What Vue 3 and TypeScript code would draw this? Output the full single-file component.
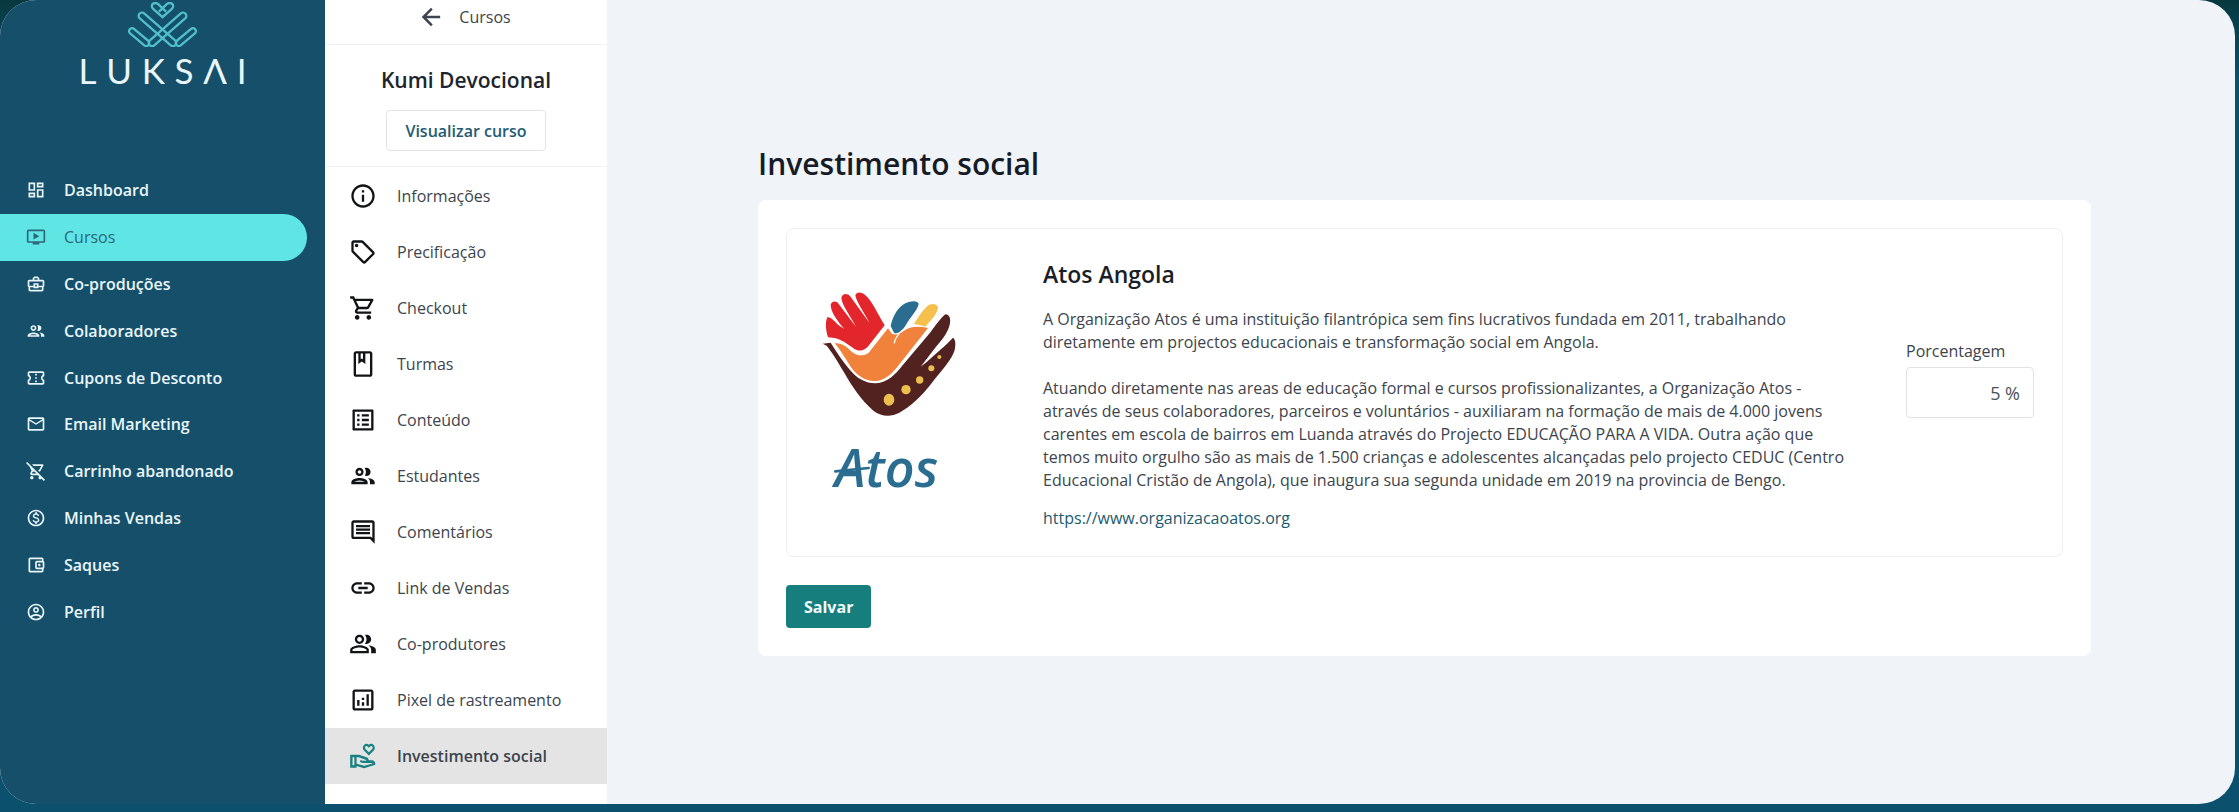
<script setup lang="ts">
import { ref } from 'vue'

interface NavItem {
  label: string
  icon: string
  active?: boolean
}

const people =
  'M9 13.75c-2.34 0-7 1.17-7 3.5V19h14v-1.75c0-2.33-4.66-3.5-7-3.5zM4.34 17c.84-.58 2.87-1.25 4.66-1.25s3.82.67 4.66 1.25H4.34zM9 12c1.93 0 3.5-1.57 3.5-3.5S10.93 5 9 5 5.5 6.57 5.5 8.5 7.07 12 9 12zm0-5c.83 0 1.5.67 1.5 1.5S9.83 10 9 10s-1.5-.67-1.5-1.5S8.17 7 9 7zm7.04 6.81c1.16.84 1.96 1.96 1.96 3.44V19h4v-1.75c0-2.02-3.5-3.17-5.96-3.44zM15 12c1.93 0 3.5-1.57 3.5-3.5S16.93 5 15 5c-.54 0-1.04.13-1.5.35.63.89 1 1.98 1 3.15s-.37 2.26-1 3.15c.46.22.96.35 1.5.35z'

const mainNav: NavItem[] = [
  { label: 'Dashboard', icon: 'M19 5v2h-4V5h4M9 5v6H5V5h4m10 8v6h-4v-6h4M9 17v2H5v-2h4M21 3h-8v6h8V3zM11 3H3v10h8V3zm10 8h-8v10h8V11zm-10 4H3v6h8v-6z' },
  { label: 'Cursos', active: true, icon: 'M21 3H3c-1.11 0-2 .89-2 2v12c0 1.1.89 2 2 2h5v2h8v-2h5c1.1 0 1.99-.9 1.99-2L23 5c0-1.11-.9-2-2-2zm0 14H3V5h18v12zm-5-6l-7 4V7z' },
  { label: 'Co-produções', icon: 'M20 7h-4V5l-2-2h-4L8 5v2H4c-1.1 0-2 .9-2 2v5c0 .75.4 1.38 1 1.73V19c0 1.11.89 2 2 2h14c1.11 0 2-.89 2-2v-3.28c.59-.35 1-.99 1-1.72V9c0-1.1-.9-2-2-2zM10 5h4v2h-4V5zM4 9h16v5h-5v-3H9v3H4V9zm9 6h-2v-2h2v2zm6 4H5v-3h4v1h6v-1h4v3z' },
  { label: 'Colaboradores', icon: people },
  { label: 'Cupons de Desconto', icon: 'M22 10V6c0-1.11-.9-2-2-2H4c-1.1 0-1.99.89-1.99 2v4c1.1 0 1.99.9 1.99 2s-.89 2-2 2v4c0 1.1.9 2 2 2h16c1.1 0 2-.9 2-2v-4c-1.1 0-2-.9-2-2s.9-2 2-2zm-2-1.46c-1.19.69-2 1.99-2 3.46s.81 2.77 2 3.46V18H4v-2.54c1.19-.69 2-1.99 2-3.46 0-1.48-.8-2.77-1.99-3.46L4 6h16v2.54zM11 15h2v2h-2zm0-4h2v2h-2zm0-4h2v2h-2z' },
  { label: 'Email Marketing', icon: 'M22 6c0-1.1-.9-2-2-2H4c-1.1 0-2 .9-2 2v12c0 1.1.9 2 2 2h16c1.1 0 2-.9 2-2V6zm-2 0l-8 5-8-5h16zm0 12H4V8l8 5 8-5v10z' },
  { label: 'Carrinho abandonado', icon: 'M1.41 1.13L0 2.54l4.39 4.39 2.21 4.66-1.35 2.45c-.16.28-.25.61-.25.96 0 1.1.9 2 2 2h7.46l1.38 1.38c-.5.36-.83.95-.83 1.62 0 1.1.89 2 1.99 2 .67 0 1.26-.33 1.62-.84L21.46 24l1.41-1.41L1.41 1.13zM7 15l1.1-2h2.36l2 2H7zM20 4H7.12l2 2h9.19l-2.76 5h-1.44l1.94 1.94c.54-.14.99-.49 1.25-.97l3.58-6.49C21.25 4.82 20.76 4 20 4zM7 18c-1.1 0-1.99.9-1.99 2S5.9 22 7 22s2-.9 2-2-.9-2-2-2z' },
  { label: 'Minhas Vendas', icon: 'M12 2C6.48 2 2 6.48 2 12s4.48 10 10 10 10-4.48 10-10S17.52 2 12 2zm0 18c-4.41 0-8-3.59-8-8s3.59-8 8-8 8 3.59 8 8-3.59 8-8 8zm.31-8.86c-1.77-.45-2.34-.94-2.34-1.67 0-.84.79-1.43 2.1-1.43 1.38 0 1.9.66 1.94 1.64h1.71c-.05-1.34-.87-2.57-2.49-2.97V5H10.9v1.69c-1.51.32-2.72 1.3-2.72 2.81 0 1.79 1.49 2.69 3.66 3.21 1.95.46 2.34 1.15 2.34 1.87 0 .53-.39 1.39-2.1 1.39-1.6 0-2.23-.72-2.32-1.64H8.04c.1 1.7 1.36 2.66 2.86 2.97V19h2.34v-1.67c1.52-.29 2.72-1.16 2.73-2.77-.01-2.2-1.9-2.96-3.66-3.42z' },
  { label: 'Saques', icon: 'M21 7.28V5c0-1.1-.9-2-2-2H5c-1.11 0-2 .9-2 2v14c0 1.1.89 2 2 2h14c1.1 0 2-.9 2-2v-2.28c.59-.35 1-.98 1-1.72V9c0-.74-.41-1.37-1-1.72zM20 9v6h-7V9h7zM5 19V5h14v2h-6c-1.1 0-2 .9-2 2v6c0 1.1.9 2 2 2h6v2H5zM16 10.5a1.5 1.5 0 1 0 0 3a1.5 1.5 0 1 0 0-3z' },
  { label: 'Perfil', icon: 'M12 2C6.48 2 2 6.48 2 12s4.48 10 10 10 10-4.48 10-10S17.52 2 12 2zM7.07 18.28c.43-.9 3.05-1.78 4.93-1.78s4.51.88 4.93 1.78C15.57 19.36 13.86 20 12 20s-3.57-.64-4.93-1.72zm11.29-1.45c-1.43-1.74-4.9-2.33-6.36-2.33s-4.93.59-6.36 2.33C4.62 15.49 4 13.82 4 12c0-4.41 3.59-8 8-8s8 3.59 8 8c0 1.82-.62 3.49-1.64 4.83zM12 6c-1.94 0-3.5 1.56-3.5 3.5S10.06 13 12 13s3.5-1.56 3.5-3.5S13.94 6 12 6zm0 5c-.83 0-1.5-.67-1.5-1.5S11.17 8 12 8s1.5.67 1.5 1.5S12.83 11 12 11z' },
]

const courseNav: NavItem[] = [
  { label: 'Informações', icon: 'M11 7h2v2h-2zm0 4h2v6h-2zm1-9C6.48 2 2 6.48 2 12s4.48 10 10 10 10-4.48 10-10S17.52 2 12 2zm0 18c-4.41 0-8-3.59-8-8s3.59-8 8-8 8 3.59 8 8-3.59 8-8 8z' },
  { label: 'Precificação', icon: 'M21.41 11.58l-9-9C12.05 2.22 11.55 2 11 2H4c-1.1 0-2 .9-2 2v7c0 .55.22 1.05.59 1.42l9 9c.36.36.86.58 1.41.58s1.05-.22 1.41-.59l7-7c.37-.36.59-.86.59-1.41s-.23-1.06-.59-1.42zM13 20.01L4 11V4h7v-.01l9 9-7 7.02zM6.5 5a1.5 1.5 0 1 0 0 3a1.5 1.5 0 1 0 0-3z' },
  { label: 'Checkout', icon: 'M15.55 13c.75 0 1.41-.41 1.75-1.03l3.58-6.49c.37-.66-.11-1.48-.87-1.48H5.21l-.94-2H1v2h2l3.6 7.59-1.35 2.44C4.52 15.37 5.48 17 7 17h12v-2H7l1.1-2h7.45zM6.16 6h12.15l-2.76 5H8.53L6.16 6zM7 18c-1.1 0-1.99.9-1.99 2S5.9 22 7 22s2-.9 2-2-.9-2-2-2zm10 0c-1.1 0-1.99.9-1.99 2s.89 2 1.99 2 2-.9 2-2-.9-2-2-2z' },
  { label: 'Turmas', icon: 'M18 1H6c-1.1 0-2 .9-2 2v18c0 1.1.9 2 2 2h12c1.1 0 2-.9 2-2V3c0-1.1-.9-2-2-2zM10 3h2v5l-1-.75L10 8V3zm8 18H6V3h2v9l3-2.25L14 12V3h4v18z' },
  { label: 'Conteúdo', icon: 'M19 5v14H5V5h14m1.1-2H3.9c-.5 0-.9.4-.9.9v16.2c0 .4.4.9.9.9h16.2c.4 0 .9-.5.9-.9V3.9c0-.5-.5-.9-.9-.9zM11 7h6v2h-6V7zm0 4h6v2h-6v-2zm0 4h6v2h-6zM7 7h2v2H7zm0 4h2v2H7zm0 4h2v2H7z' },
  { label: 'Estudantes', icon: people },
  { label: 'Comentários', icon: 'M21.99 4c0-1.1-.89-2-1.99-2H4c-1.1 0-2 .9-2 2v12c0 1.1.9 2 2 2h14l4 4-.01-18zM20 4v13.17L18.83 16H4V4h16zM6 12h12v2H6zm0-3h12v2H6zm0-3h12v2H6z' },
  { label: 'Link de Vendas', icon: 'M3.9 12c0-1.71 1.39-3.1 3.1-3.1h4V7H7c-2.76 0-5 2.24-5 5s2.24 5 5 5h4v-1.9H7c-1.71 0-3.1-1.39-3.1-3.1zM8 13h8v-2H8v2zm9-6h-4v1.9h4c1.71 0 3.1 1.39 3.1 3.1s-1.39 3.1-3.1 3.1h-4V17h4c2.76 0 5-2.24 5-5s-2.24-5-5-5z' },
  { label: 'Co-produtores', icon: 'M16.67 13.13C18.04 14.06 19 15.32 19 17v3h4v-3c0-2.18-3.57-3.47-6.33-3.87zM15 12c2.21 0 4-1.79 4-4s-1.79-4-4-4c-.47 0-.91.1-1.33.24C14.5 5.27 15 6.58 15 8s-.5 2.73-1.33 3.76c.42.14.86.24 1.33.24zM9 12c2.21 0 4-1.79 4-4s-1.79-4-4-4-4 1.79-4 4 1.79 4 4 4zm0-6c1.1 0 2 .9 2 2s-.9 2-2 2-2-.9-2-2 .9-2 2-2zm0 7c-2.67 0-8 1.34-8 4v3h16v-3c0-2.66-5.33-4-8-4zm6 5H3v-.99C3.2 16.29 6.3 15 9 15s5.8 1.29 6 2v1z' },
  { label: 'Pixel de rastreamento', icon: 'M19 3H5c-1.1 0-2 .9-2 2v14c0 1.1.9 2 2 2h14c1.1 0 2-.9 2-2V5c0-1.1-.9-2-2-2zm0 16H5V5h14v14zM7 12h2v5H7zM15 7h2v10h-2zM11 14h2v3h-2zM11 10h2v2h-2z' },
  { label: 'Investimento social', active: true, icon: 'M1 11v11h5.5v-1.4l6.5 1.9 9.5-2.9v-1c0-1.7-1.3-2.9-3-2.9h-2.6c0-1.3-.7-2.3-1.9-2.7L8.6 11zM3 13h1.6v7H3zM6.500 13h1.8l6 2.200c.4.200.6.500.6.900h-3.200l-1.800-.6-.6 1.600 2.500.9h7.700c.4 0 .7.2.8.5L13 20.400l-6.500-1.800zM17 11.500l-4-3.900c-1.300-1.300-1.500-3.200-.5-4.700C13.700 1.300 15.800 1.100 17 2.400c1.200-1.300 3.300-1.100 4.500.5 1 1.500.8 3.400-.5 4.700zM17 8.700l2.600-2.500c.8-.8.900-1.500.5-2.200-.5-.8-1.600-.8-2.200 0L17 5l-.9-1c-.6-.8-1.700-.8-2.200 0-.4.700-.3 1.400.5 2.200z' },
]

const wordmark = ['L', 'U', 'K', 'S', 'Λ', 'I']
const percentage = ref('5 %')
</script>

<template>
  <div class="page">
    <div class="shell">
      <aside class="sidebar">
        <div class="brand">
          <svg class="brand-mark" viewBox="380 5 214 136" aria-hidden="true">
            <g fill="none" stroke="#4fc0c9" stroke-width="7">
              <rect x="-10" y="-10" width="144" height="20" rx="10" transform="translate(425 47) rotate(41)" />
              <rect x="-10" y="-10" width="144" height="20" rx="10" transform="translate(549 47) rotate(139)" />
              <rect x="-9" y="-9" width="74" height="18" rx="9" transform="translate(395 93) rotate(40)" />
              <rect x="-9" y="-9" width="74" height="18" rx="9" transform="translate(579 93) rotate(140)" />
              <path d="M487 51L458 25C448 12 463 3 475 12L487 24L499 12C511 3 526 12 516 25ZM487 24L476 34M487 24L498 34" />
            </g>
          </svg>
          <div class="wordmark" role="img" aria-label="LUKSAI">
            <span v-for="letter in wordmark" :key="letter">{{ letter }}</span>
          </div>
        </div>
        <nav class="main-nav" aria-label="Menu principal">
          <a v-for="item in mainNav" :key="item.label" href="#" :class="{ active: item.active }">
            <svg viewBox="0 0 24 24" aria-hidden="true"><path :d="item.icon" /></svg>
            <span>{{ item.label }}</span>
          </a>
        </nav>
      </aside>

      <aside class="course">
        <a class="back" href="#">
          <svg viewBox="0 0 24 24" aria-hidden="true"><path d="M23 12H3M13 2L3 12l10 10" /></svg>
          <span>Cursos</span>
        </a>
        <div class="course-head">
          <h2>Kumi Devocional</h2>
          <button type="button" class="outline-button">Visualizar curso</button>
        </div>
        <nav class="course-nav" aria-label="Curso">
          <a v-for="item in courseNav" :key="item.label" href="#" :class="{ active: item.active }">
            <svg viewBox="0 0 24 24" aria-hidden="true"><path :d="item.icon" fill-rule="evenodd" /></svg>
            <span>{{ item.label }}</span>
          </a>
        </nav>
      </aside>

      <main class="content">
        <h1>Investimento social</h1>
        <form class="card" @submit.prevent>
          <section class="organization">
            <svg class="org-logo" viewBox="66 26 402 630" role="img" aria-label="Atos">
              <path fill="#522220" d="M68 187L92 184C112 215 128 240 148 264C172 294 200 307 228 306C262 304 286 280 306 254L392 152C406 134 420 112 436 99C450 100 454 116 448 134C440 160 424 178 408 196L362 256L380 242C410 214 436 194 459 169C469 174 467 200 462 212C448 246 420 272 396 304C366 344 330 376 298 394C272 408 244 406 220 388C184 358 154 312 130 270C112 238 94 210 80 193Z" />
              <path fill="#f0823c" d="M104 186C126 184 140 196 156 212C172 224 190 226 206 214L264 141L276 157C286 162 300 158 312 148C330 134 356 134 384 140L294 254C272 282 252 298 226 299C196 300 170 282 152 256C136 232 122 206 104 186Z" />
              <path fill="none" stroke="#fff" stroke-width="4" d="M283 186Q284 172 298 156" />
              <path fill="#e3262b" d="M84 168C76 144 76 120 82 108C92 106 104 120 116 132L132 142C112 118 92 92 92 70C96 58 110 58 116 68L168 136C150 102 126 72 124 50C126 36 142 34 150 44L208 124C194 96 168 60 166 42C170 30 186 32 196 42C216 58 232 96 254 132L208 190C196 208 178 212 162 202C144 190 126 174 104 170Z" />
              <path fill="#2a6d91" d="M272 134C278 104 294 78 316 66C334 56 356 58 356 68C352 88 330 108 318 130C308 148 290 160 282 154Z" />
              <path fill="#f5c04c" d="M342 128C352 112 364 90 380 76C392 64 410 66 414 78C412 98 394 116 376 136C364 132 354 130 342 128Z" />
              <g fill="#ecc04e">
                <ellipse cx="267" cy="355" rx="16" ry="18" />
                <circle cx="318" cy="325" r="14" />
                <circle cx="359" cy="296" r="11" />
                <circle cx="394" cy="261" r="9" />
                <circle cx="418" cy="227" r="6" />
              </g>
              <path fill="none" stroke="#2a6d91" stroke-width="8" stroke-linecap="round" d="M106 570L206 560" />
              <text x="104" y="618" class="org-name">Atos</text>
            </svg>
            <div class="org-text">
              <h3>Atos Angola</h3>
              <p>A Organização Atos é uma instituição filantrópica sem fins lucrativos fundada em 2011, trabalhando<br>diretamente em projectos educacionais e transformação social em Angola.</p>
              <p>Atuando diretamente nas areas de educação formal e cursos profissionalizantes, a Organização Atos -<br>através de seus colaboradores, parceiros e voluntários - auxiliaram na formação de mais de 4.000 jovens<br>carentes em escola de bairros em Luanda através do Projecto EDUCAÇÃO PARA A VIDA. Outra ação que<br>temos muito orgulho são as mais de 1.500 crianças e adolescentes alcançadas pelo projecto CEDUC (Centro<br>Educacional Cristão de Angola), que inaugura sua segunda unidade em 2019 na provincia de Bengo.</p>
              <a href="https://www.organizacaoatos.org">https://www.organizacaoatos.org</a>
            </div>
            <div class="field">
              <label for="percentage">Porcentagem</label>
              <input id="percentage" v-model="percentage" type="text">
            </div>
          </section>
          <button type="submit" class="save">Salvar</button>
        </form>
      </main>
    </div>
  </div>
</template>

<style>
body {
  margin: 0;
}
</style>

<style scoped>
* {
  box-sizing: border-box;
}

.page {
  min-height: 100vh;
  display: flex;
  padding: 0 4px 8px 0;
  background: linear-gradient(180deg, #07383f 0, #0b516d 80px);
  font-family: "Open Sans", "Noto Sans", sans-serif;
  color: #3d444d;
}

.shell {
  flex: 1;
  display: flex;
  border-radius: 36px;
  overflow: hidden;
  background: #f0f4f9;
}

a {
  text-decoration: none;
  color: inherit;
}

h1, h2, h3, p {
  margin: 0;
}

.sidebar {
  flex: none;
  width: 325px;
  background: #164f6a;
  color: #e9f6fb;
}

.brand {
  height: 167px;
  padding-top: 2px;
  display: flex;
  flex-direction: column;
  align-items: center;
}

.brand-mark {
  width: 71px;
  height: 45px;
}

.wordmark {
  display: flex;
  justify-content: space-between;
  width: 168px;
  margin-top: 3px;
  font-family: Lato, sans-serif;
  font-size: 35px;
  line-height: 40px;
}

.main-nav {
  display: flex;
  flex-direction: column;
  height: 468px;
  margin-right: 18px;
}

.main-nav a {
  flex: 1;
  display: flex;
  align-items: center;
  gap: 18px;
  padding-left: 26px;
  border-radius: 0 24px 24px 0;
  font-size: 16px;
  font-weight: 600;
}

.main-nav svg {
  width: 20px;
  height: 20px;
  fill: currentColor;
}

.main-nav .active {
  background: #5ee5e4;
  color: #2d6778;
  font-weight: 500;
}

.course {
  flex: none;
  width: 282px;
  background: #fff;
}

.back {
  display: flex;
  align-items: center;
  justify-content: center;
  gap: 18px;
  height: 45px;
  padding-bottom: 10px;
  border-bottom: 1px solid #eff1f3;
  font-size: 16px;
}

.back svg {
  width: 20px;
  height: 20px;
  fill: none;
  stroke: currentColor;
  stroke-width: 3;
}

.course-head {
  display: flex;
  flex-direction: column;
  align-items: center;
  gap: 15px;
  padding: 21px 0 15px;
  margin-bottom: 1px;
  border-bottom: 1px solid #eff1f3;
}

h2 {
  font-size: 21px;
  line-height: 29px;
  font-weight: 600;
  color: #20242c;
}

button {
  font-family: inherit;
  cursor: pointer;
}

.outline-button {
  height: 41px;
  padding: 0 18px;
  border: 1px solid #e0e4e8;
  border-radius: 4px;
  background: #fff;
  font-size: 16px;
  font-weight: 600;
  color: #235b76;
}

.course-nav a {
  display: flex;
  align-items: center;
  gap: 20px;
  height: 56px;
  padding-left: 24px;
  font-size: 16px;
}

.course-nav svg {
  width: 28px;
  height: 28px;
  fill: #111417;
}

.course-nav .active {
  background: #e4e4e4;
  font-weight: 600;
}

.course-nav .active svg {
  fill: #188080;
}

.content {
  flex: 1;
  min-width: 0;
  padding: 144px 144px 24px 151px;
}

h1 {
  font-size: 30px;
  line-height: 40px;
  font-weight: 600;
  color: #171b26;
}

.card {
  margin-top: 16px;
  padding: 28px;
  border-radius: 8px;
  background: #fff;
}

.organization {
  display: flex;
  align-items: center;
  padding: 31px 28px 26px 35px;
  border: 1px solid #eceef0;
  border-radius: 8px;
}

.org-logo {
  flex: none;
  width: 134px;
  height: 210px;
  margin-right: 87px;
  overflow: visible;
}

.org-name {
  font: italic 700 190px "Liberation Sans Narrow", "Open Sans", sans-serif;
  font-size: 156px;
  font-weight: 600;
  fill: #2a6d91;
}

.org-text {
  flex: 1;
  font-size: 16px;
  line-height: 23px;
}

h3 {
  margin-bottom: 20px;
  font-size: 23px;
  line-height: 28px;
  font-weight: 600;
  color: #1a1e27;
}

.org-text p {
  margin-bottom: 23px;
}

.org-text p + p {
  margin-bottom: 15px;
}

.org-text a {
  display: block;
  color: #1b5a70;
}

.field {
  flex: none;
  width: 128px;
  align-self: flex-start;
  margin-top: 80px;
}

.field label {
  display: block;
  margin-bottom: 5px;
  font-size: 16px;
  line-height: 22px;
}

.field input {
  display: block;
  width: 100%;
  height: 51px;
  padding: 0 13px;
  border: 1px solid #dfe3e7;
  border-radius: 4px;
  background: #fff;
  font-family: inherit;
  font-size: 18px;
  text-align: right;
  color: #4a5058;
}

.save {
  display: block;
  height: 43px;
  margin-top: 28px;
  padding: 0 18px;
  border: 0;
  border-radius: 4px;
  background: #177e7e;
  font-size: 16px;
  font-weight: 700;
  color: #f2fbfb;
}
</style>
